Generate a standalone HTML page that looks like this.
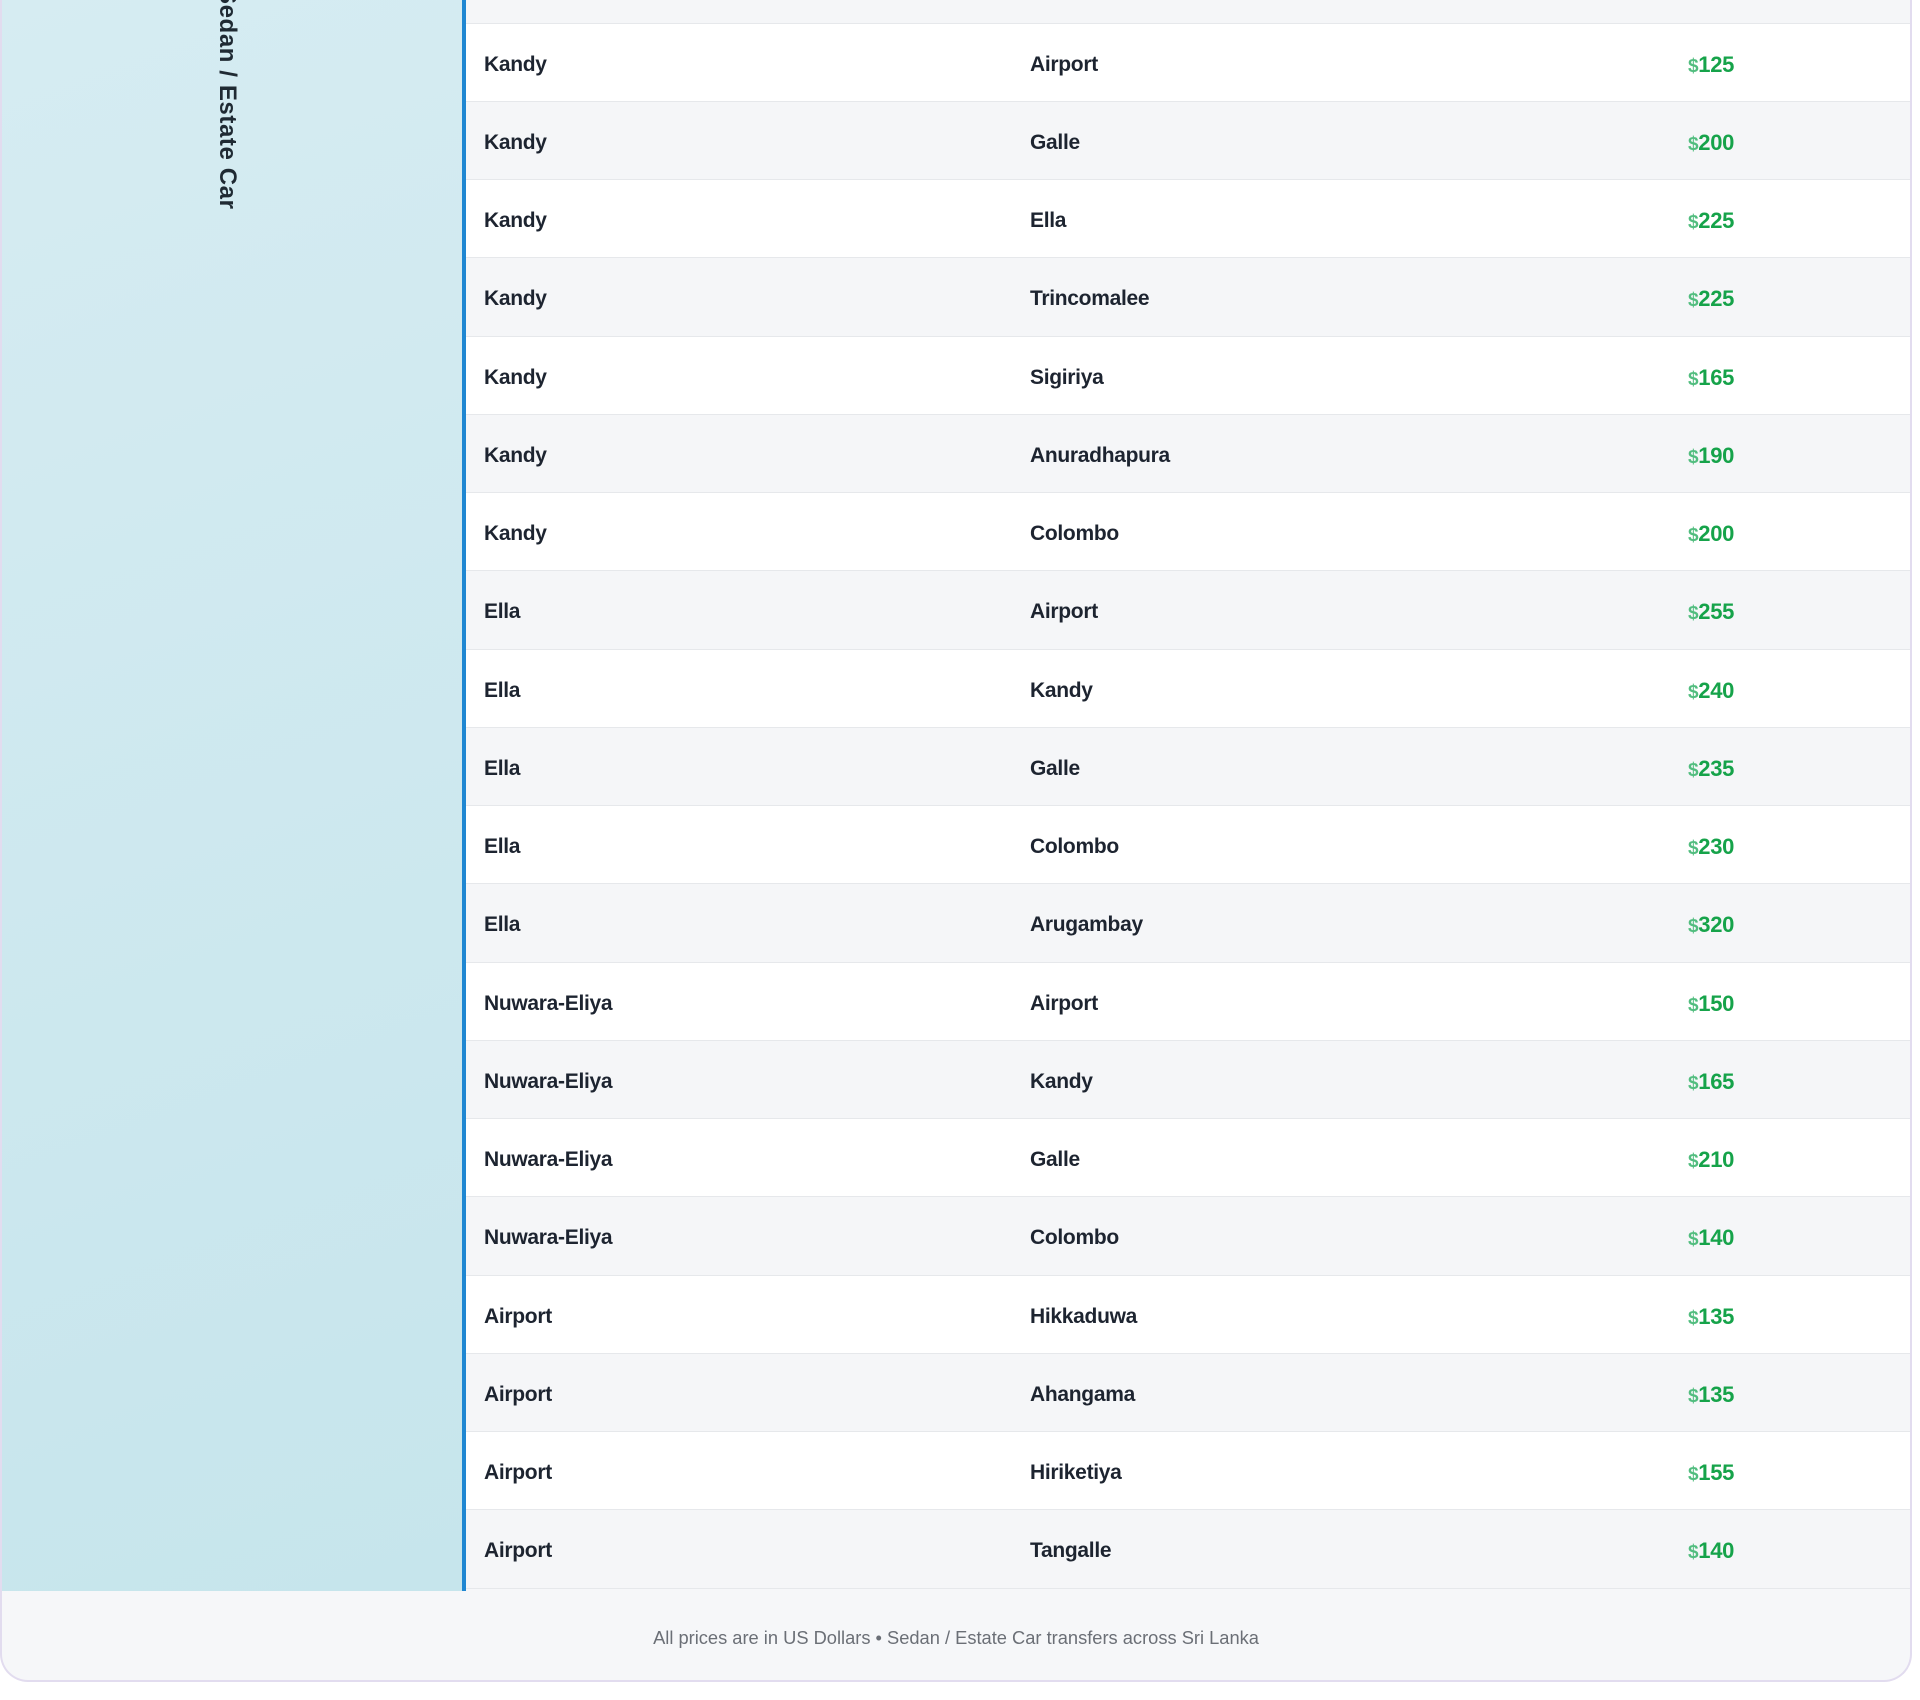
<!DOCTYPE html>
<html><head><meta charset="utf-8"><style>
html,body{margin:0;padding:0;background:#fff;}
body{width:1920px;height:1700px;position:relative;overflow:hidden;font-family:"Liberation Sans",sans-serif;}
.card{position:absolute;left:0;top:-30px;width:1912px;height:1712px;border:2px solid #e2dcef;border-top:none;border-radius:0 0 28px 28px;overflow:hidden;background:#f6f7f9;box-sizing:border-box;}
.side{position:absolute;left:0;top:0;width:460px;height:1621px;background:linear-gradient(160deg,#d6ecf2,#c6e5ec);border-right:4px solid #1f87d2;}
.vt{position:absolute;left:212px;top:18px;writing-mode:vertical-rl;font-size:24px;font-weight:bold;color:#1f2a33;letter-spacing:0.6px;line-height:26px;}
.tbl{position:absolute;left:464px;top:30px;width:1446px;}
.row{box-sizing:border-box;height:78.25px;border-bottom:1.5px solid #e6e8eb;position:relative;font-size:21px;color:#1d2430;font-weight:bold;}
.row.o{background:#fff}.row.e{background:#f5f6f8}
.row span{position:absolute;top:29px;letter-spacing:-0.3px}
.c1{left:18px}.c2{left:564px}.c3{left:1222px;color:#16a34a;font-size:22px;top:28px!important}
.c3 i{font-style:normal;color:#52bd7f;font-size:19px}
.foot{position:absolute;left:0;top:1621px;width:100%;text-align:center;padding-top:36px;font-size:18.3px;color:#6b6f76;}
</style></head><body>
<div class="card">
<div class="side"><div class="vt">Sedan / Estate Car</div></div>
<div class="tbl">
<div class="row e" style="height:23.5px"></div>
<div class="row o"><span class="c1">Kandy</span><span class="c2">Airport</span><span class="c3"><i>$</i>125</span></div>
<div class="row e"><span class="c1">Kandy</span><span class="c2">Galle</span><span class="c3"><i>$</i>200</span></div>
<div class="row o"><span class="c1">Kandy</span><span class="c2">Ella</span><span class="c3"><i>$</i>225</span></div>
<div class="row e"><span class="c1">Kandy</span><span class="c2">Trincomalee</span><span class="c3"><i>$</i>225</span></div>
<div class="row o"><span class="c1">Kandy</span><span class="c2">Sigiriya</span><span class="c3"><i>$</i>165</span></div>
<div class="row e"><span class="c1">Kandy</span><span class="c2">Anuradhapura</span><span class="c3"><i>$</i>190</span></div>
<div class="row o"><span class="c1">Kandy</span><span class="c2">Colombo</span><span class="c3"><i>$</i>200</span></div>
<div class="row e"><span class="c1">Ella</span><span class="c2">Airport</span><span class="c3"><i>$</i>255</span></div>
<div class="row o"><span class="c1">Ella</span><span class="c2">Kandy</span><span class="c3"><i>$</i>240</span></div>
<div class="row e"><span class="c1">Ella</span><span class="c2">Galle</span><span class="c3"><i>$</i>235</span></div>
<div class="row o"><span class="c1">Ella</span><span class="c2">Colombo</span><span class="c3"><i>$</i>230</span></div>
<div class="row e"><span class="c1">Ella</span><span class="c2">Arugambay</span><span class="c3"><i>$</i>320</span></div>
<div class="row o"><span class="c1">Nuwara-Eliya</span><span class="c2">Airport</span><span class="c3"><i>$</i>150</span></div>
<div class="row e"><span class="c1">Nuwara-Eliya</span><span class="c2">Kandy</span><span class="c3"><i>$</i>165</span></div>
<div class="row o"><span class="c1">Nuwara-Eliya</span><span class="c2">Galle</span><span class="c3"><i>$</i>210</span></div>
<div class="row e"><span class="c1">Nuwara-Eliya</span><span class="c2">Colombo</span><span class="c3"><i>$</i>140</span></div>
<div class="row o"><span class="c1">Airport</span><span class="c2">Hikkaduwa</span><span class="c3"><i>$</i>135</span></div>
<div class="row e"><span class="c1">Airport</span><span class="c2">Ahangama</span><span class="c3"><i>$</i>135</span></div>
<div class="row o"><span class="c1">Airport</span><span class="c2">Hiriketiya</span><span class="c3"><i>$</i>155</span></div>
<div class="row e"><span class="c1">Airport</span><span class="c2">Tangalle</span><span class="c3"><i>$</i>140</span></div>
</div>
<div class="foot">All prices are in US Dollars • Sedan / Estate Car transfers across Sri Lanka</div>
</div>
</body></html>
